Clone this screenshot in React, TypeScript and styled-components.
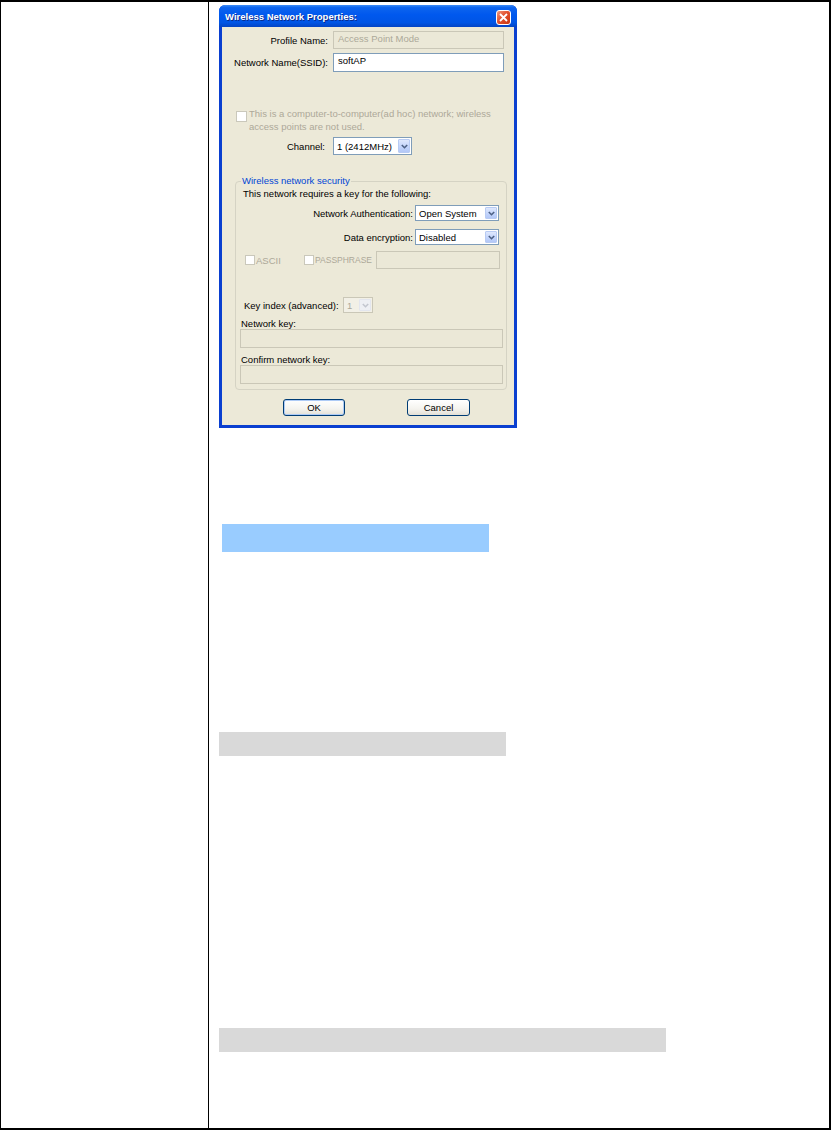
import React from "react";
import styled, { createGlobalStyle } from "styled-components";

const GlobalStyle = createGlobalStyle`
  html, body {
    margin: 0;
    padding: 0;
    background: #fff;
  }
  body {
    font-family: "Liberation Sans", Arial, sans-serif;
  }
`;

const Page = styled.div`
  box-sizing: border-box;
  width: 831px;
  height: 1130px;
  display: grid;
  grid-template-columns: 208px 1fr;
  border: 2px solid #000;
  border-left-width: 1px;
`;

const SideCell = styled.div`
  box-sizing: border-box;
  border-right: 1px solid #000;
`;

const MainCell = styled.div`
  padding: 3px 0 0 10px;
  display: flex;
  flex-direction: column;
  align-items: flex-start;
`;

const Highlight = styled.div<{ $color: string; $width: number; $height: number; $top: number; $left?: number }>`
  width: ${({ $width }) => $width}px;
  height: ${({ $height }) => $height}px;
  margin-top: ${({ $top }) => $top}px;
  margin-left: ${({ $left }) => $left ?? 0}px;
  background: ${({ $color }) => $color};
`;

/* ---- XP dialog ---- */

const Dialog = styled.div`
  box-sizing: border-box;
  width: 298px;
  height: 423px;
  display: flex;
  flex-direction: column;
  background: #0a3fd0;
  border-radius: 6px 6px 0 0;
  padding: 0 3px 3px;
  font-size: 9.5px;
  color: #000;
`;

const TitleBar = styled.div`
  height: 22px;
  margin: 0 -3px;
  padding: 0 6px;
  display: flex;
  align-items: center;
  border-radius: 6px 6px 0 0;
  background: linear-gradient(
    to bottom,
    #3d8cf5 0%,
    #0d64ee 12%,
    #0058ee 45%,
    #0055e5 80%,
    #0444c4 100%
  );
`;

const TitleText = styled.span`
  flex: 1;
  color: #fff;
  font-weight: bold;
  font-size: 9.5px;
  text-shadow: 1px 1px 0 #0b2a8a;
`;

const CloseButton = styled.span`
  box-sizing: border-box;
  width: 15px;
  height: 15px;
  margin-top: 2px;
  display: flex;
  align-items: center;
  justify-content: center;
  border: 1px solid #fff;
  border-radius: 3px;
  background: linear-gradient(135deg, #f09a80 0%, #e2512f 45%, #c83510 100%);
`;

const Body = styled.div`
  flex: 1;
  display: flex;
  flex-direction: column;
  background: #ece9d8;
`;

const Field = styled.div<{ $top: number; $height: number; $left?: number }>`
  display: flex;
  align-items: center;
  height: ${({ $height }) => $height}px;
  margin-top: ${({ $top }) => $top}px;
  margin-left: ${({ $left }) => $left ?? 0}px;
`;

const Label = styled.span<{ $width?: number; $gap?: number; $align?: "left" | "right"; $muted?: boolean }>`
  flex: none;
  width: ${({ $width }) => ($width ? `${$width}px` : "auto")};
  margin-right: ${({ $gap }) => $gap ?? 0}px;
  text-align: ${({ $align }) => $align ?? "right"};
  white-space: nowrap;
  color: ${({ $muted }) => ($muted ? "#aca899" : "#000")};
`;

const Caption = styled.div<{ $top: number; $left?: number }>`
  height: 11px;
  line-height: 11px;
  margin-top: ${({ $top }) => $top}px;
  margin-left: ${({ $left }) => $left ?? 0}px;
  white-space: nowrap;
`;

const TextBox = styled.div<{ $width: number; $height: number; $disabled?: boolean; $top?: number; $left?: number }>`
  box-sizing: border-box;
  flex: none;
  width: ${({ $width }) => $width}px;
  height: ${({ $height }) => $height}px;
  margin-top: ${({ $top }) => $top ?? 0}px;
  margin-left: ${({ $left }) => $left ?? 0}px;
  padding: 1px 4px 0;
  line-height: 12px;
  border: 1px solid ${({ $disabled }) => ($disabled ? "#cac7b7" : "#7f9db9")};
  background: ${({ $disabled }) => ($disabled ? "#ebe8d7" : "#fff")};
  color: ${({ $disabled }) => ($disabled ? "#aca899" : "#000")};
  white-space: nowrap;
`;

const SelectBox = styled.div<{ $width: number; $height: number; $disabled?: boolean }>`
  box-sizing: border-box;
  flex: none;
  width: ${({ $width }) => $width}px;
  height: ${({ $height }) => $height}px;
  display: flex;
  align-items: center;
  padding: 1px 1px 1px 3px;
  border: 1px solid ${({ $disabled }) => ($disabled ? "#cac7b7" : "#7f9db9")};
  background: ${({ $disabled }) => ($disabled ? "#f2f0e6" : "#fff")};
  color: ${({ $disabled }) => ($disabled ? "#aca899" : "#000")};
  white-space: nowrap;
`;

const SelectValue = styled.span`
  flex: 1;
  overflow: hidden;
`;

const SelectArrow = styled.span<{ $disabled?: boolean }>`
  box-sizing: border-box;
  flex: none;
  width: 12px;
  height: 100%;
  display: flex;
  align-items: center;
  justify-content: center;
  border-radius: 1px;
  border: 1px solid ${({ $disabled }) => ($disabled ? "#e3e6ee" : "#b8cbf3")};
  background: ${({ $disabled }) =>
    $disabled ? "#eef0f4" : "linear-gradient(to bottom, #dfe8fd, #c1d3fb 60%, #b3c8f7)"};
`;

const CheckBox = styled.span<{ $size?: number; $left?: number }>`
  box-sizing: border-box;
  flex: none;
  width: ${({ $size }) => $size ?? 10}px;
  height: ${({ $size }) => $size ?? 10}px;
  margin-left: ${({ $left }) => $left ?? 0}px;
  border: 1px solid #cac8bb;
  background: #fff;
`;

const Option = styled.span<{ $width: number; $size?: number }>`
  flex: none;
  width: ${({ $width }) => $width}px;
  display: flex;
  align-items: center;
  gap: 1px;
  font-size: ${({ $size }) => $size ?? 9.5}px;
  color: #aca899;
`;

const AdHocRow = styled.div`
  display: flex;
  align-items: flex-start;
  margin: 35px 0 0 14px;
  color: #aca899;
`;

const AdHocText = styled.span`
  margin-left: 2px;
  line-height: 13px;
`;

const GroupBox = styled.fieldset`
  box-sizing: border-box;
  width: 272px;
  margin: 20px 0 0 13px;
  padding: 0 7px 5px;
  border: 1px solid #d5d3c4;
  border-radius: 4px;
  min-inline-size: 0;
`;

const GroupLegend = styled.legend`
  margin-left: -2px;
  padding: 0 1px;
  line-height: 12px;
  color: #0046d5;
`;

const ButtonRow = styled.div`
  display: flex;
  margin: 9px 0 0 61px;
  gap: 62px;
`;

const PushButton = styled.button<{ $width: number; $default?: boolean }>`
  box-sizing: border-box;
  width: ${({ $width }) => $width}px;
  height: 17px;
  padding: 0;
  border: 1px solid #003c74;
  border-radius: 3px;
  background: linear-gradient(to bottom, #ffffff 0%, #f4f3ee 60%, #e3e0d6 100%);
  box-shadow: ${({ $default }) => ($default ? "inset 0 0 0 1px #aecbf6" : "none")};
  font-family: "Liberation Sans", Arial, sans-serif;
  font-size: 9.5px;
  color: #000;
`;

function Chevron({ faded }: { faded?: boolean }) {
  return (
    <svg width="7" height="5" viewBox="0 0 7 5">
      <polyline
        points="0.8,1 3.5,3.7 6.2,1"
        fill="none"
        stroke={faded ? "#c3c7cf" : "#4d6185"}
        strokeWidth="1.6"
      />
    </svg>
  );
}

interface SelectProps {
  value: string;
  width: number;
  height: number;
  disabled?: boolean;
}

function Select({ value, width, height, disabled }: SelectProps) {
  return (
    <SelectBox $width={width} $height={height} $disabled={disabled}>
      <SelectValue>{value}</SelectValue>
      <SelectArrow $disabled={disabled}>
        <Chevron faded={disabled} />
      </SelectArrow>
    </SelectBox>
  );
}

function WirelessDialog() {
  return (
    <Dialog>
      <TitleBar>
        <TitleText>Wireless Network Properties:</TitleText>
        <CloseButton>
          <svg width="9" height="9" viewBox="0 0 9 9">
            <path d="M1 1 L8 8 M8 1 L1 8" stroke="#fff" strokeWidth="1.8" />
          </svg>
        </CloseButton>
      </TitleBar>
      <Body>
        <Field $top={4} $height={18}>
          <Label $width={106} $gap={5}>Profile Name:</Label>
          <TextBox $width={171} $height={18} $disabled>
            Access Point Mode
          </TextBox>
        </Field>
        <Field $top={4} $height={19}>
          <Label $width={106} $gap={5}>Network Name(SSID):</Label>
          <TextBox $width={171} $height={19}>softAP</TextBox>
        </Field>

        <AdHocRow>
          <CheckBox $size={11} style={{ marginTop: 4 }} />
          <AdHocText>
            This is a computer-to-computer(ad hoc) network; wireless
            <br />
            access points are not used.
          </AdHocText>
        </AdHocRow>

        <Field $top={4} $height={18}>
          <Label $width={103} $gap={8}>Channel:</Label>
          <Select value="1  (2412MHz)" width={79} height={18} />
        </Field>

        <GroupBox>
          <GroupLegend>Wireless network security</GroupLegend>
          <Caption $top={1}>This network requires a key for the following:</Caption>
          <Field $top={6} $height={16}>
            <Label $width={170} $gap={2}>Network Authentication:</Label>
            <Select value="Open System" width={84} height={16} />
          </Field>
          <Field $top={8} $height={16}>
            <Label $width={170} $gap={2}>Data encryption:</Label>
            <Select value="Disabled" width={84} height={16} />
          </Field>
          <Field $top={6} $height={18}>
            <Option $width={61}>
              <CheckBox $left={2} />
              ASCII
            </Option>
            <Option $width={72} $size={8.5}>
              <CheckBox />
              PASSPHRASE
            </Option>
            <TextBox $width={124} $height={18} $disabled />
          </Field>
          <Field $top={28} $height={16} $left={1}>
            <Label $width={97} $gap={2} $align="left">Key index (advanced):</Label>
            <Select value="1" width={30} height={16} disabled />
          </Field>
          <Caption $top={5} $left={-2}>Network key:</Caption>
          <TextBox $width={263} $height={19} $left={-3} $disabled />
          <Caption $top={6} $left={-2}>Confirm network key:</Caption>
          <TextBox $width={263} $height={19} $left={-3} $disabled />
        </GroupBox>

        <ButtonRow>
          <PushButton $width={62} $default>OK</PushButton>
          <PushButton $width={63}>Cancel</PushButton>
        </ButtonRow>
      </Body>
    </Dialog>
  );
}

export default function App() {
  return (
    <>
      <GlobalStyle />
      <Page>
        <SideCell />
        <MainCell>
          <WirelessDialog />
          <Highlight $color="#99ccff" $width={267} $height={28} $top={96} $left={3} />
          <Highlight $color="#d9d9d9" $width={287} $height={24} $top={180} />
          <Highlight $color="#d9d9d9" $width={447} $height={24} $top={272} />
        </MainCell>
      </Page>
    </>
  );
}
